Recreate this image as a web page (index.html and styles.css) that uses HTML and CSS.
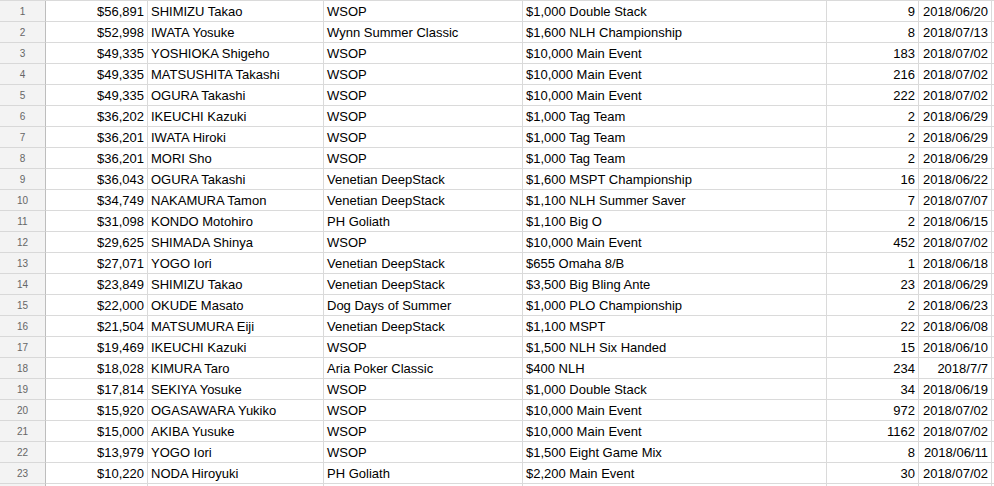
FILE: index.html
```html
<!DOCTYPE html>
<html>
<head>
<meta charset="utf-8">
<link rel="stylesheet" href="styles.css">
</head>
<body>
<div class="sheet">
  <div class="rh">1</div><div class="c r">$56,891</div><div class="c">SHIMIZU Takao</div><div class="c">WSOP</div><div class="c">$1,000 Double Stack</div><div class="c r">9</div><div class="c r">2018/06/20</div><div class="c e"></div>
  <div class="rh">2</div><div class="c r">$52,998</div><div class="c">IWATA Yosuke</div><div class="c">Wynn Summer Classic</div><div class="c">$1,600 NLH Championship</div><div class="c r">8</div><div class="c r">2018/07/13</div><div class="c e"></div>
  <div class="rh">3</div><div class="c r">$49,335</div><div class="c">YOSHIOKA Shigeho</div><div class="c">WSOP</div><div class="c">$10,000 Main Event</div><div class="c r">183</div><div class="c r">2018/07/02</div><div class="c e"></div>
  <div class="rh">4</div><div class="c r">$49,335</div><div class="c">MATSUSHITA Takashi</div><div class="c">WSOP</div><div class="c">$10,000 Main Event</div><div class="c r">216</div><div class="c r">2018/07/02</div><div class="c e"></div>
  <div class="rh">5</div><div class="c r">$49,335</div><div class="c">OGURA Takashi</div><div class="c">WSOP</div><div class="c">$10,000 Main Event</div><div class="c r">222</div><div class="c r">2018/07/02</div><div class="c e"></div>
  <div class="rh">6</div><div class="c r">$36,202</div><div class="c">IKEUCHI Kazuki</div><div class="c">WSOP</div><div class="c">$1,000 Tag Team</div><div class="c r">2</div><div class="c r">2018/06/29</div><div class="c e"></div>
  <div class="rh">7</div><div class="c r">$36,201</div><div class="c">IWATA Hiroki</div><div class="c">WSOP</div><div class="c">$1,000 Tag Team</div><div class="c r">2</div><div class="c r">2018/06/29</div><div class="c e"></div>
  <div class="rh">8</div><div class="c r">$36,201</div><div class="c">MORI Sho</div><div class="c">WSOP</div><div class="c">$1,000 Tag Team</div><div class="c r">2</div><div class="c r">2018/06/29</div><div class="c e"></div>
  <div class="rh">9</div><div class="c r">$36,043</div><div class="c">OGURA Takashi</div><div class="c">Venetian DeepStack</div><div class="c">$1,600 MSPT Championship</div><div class="c r">16</div><div class="c r">2018/06/22</div><div class="c e"></div>
  <div class="rh">10</div><div class="c r">$34,749</div><div class="c">NAKAMURA Tamon</div><div class="c">Venetian DeepStack</div><div class="c">$1,100 NLH Summer Saver</div><div class="c r">7</div><div class="c r">2018/07/07</div><div class="c e"></div>
  <div class="rh">11</div><div class="c r">$31,098</div><div class="c">KONDO Motohiro</div><div class="c">PH Goliath</div><div class="c">$1,100 Big O</div><div class="c r">2</div><div class="c r">2018/06/15</div><div class="c e"></div>
  <div class="rh">12</div><div class="c r">$29,625</div><div class="c">SHIMADA Shinya</div><div class="c">WSOP</div><div class="c">$10,000 Main Event</div><div class="c r">452</div><div class="c r">2018/07/02</div><div class="c e"></div>
  <div class="rh">13</div><div class="c r">$27,071</div><div class="c">YOGO Iori</div><div class="c">Venetian DeepStack</div><div class="c">$655 Omaha 8/B</div><div class="c r">1</div><div class="c r">2018/06/18</div><div class="c e"></div>
  <div class="rh">14</div><div class="c r">$23,849</div><div class="c">SHIMIZU Takao</div><div class="c">Venetian DeepStack</div><div class="c">$3,500 Big Bling Ante</div><div class="c r">23</div><div class="c r">2018/06/29</div><div class="c e"></div>
  <div class="rh">15</div><div class="c r">$22,000</div><div class="c">OKUDE Masato</div><div class="c">Dog Days of Summer</div><div class="c">$1,000 PLO Championship</div><div class="c r">2</div><div class="c r">2018/06/23</div><div class="c e"></div>
  <div class="rh">16</div><div class="c r">$21,504</div><div class="c">MATSUMURA Eiji</div><div class="c">Venetian DeepStack</div><div class="c">$1,100 MSPT</div><div class="c r">22</div><div class="c r">2018/06/08</div><div class="c e"></div>
  <div class="rh">17</div><div class="c r">$19,469</div><div class="c">IKEUCHI Kazuki</div><div class="c">WSOP</div><div class="c">$1,500 NLH Six Handed</div><div class="c r">15</div><div class="c r">2018/06/10</div><div class="c e"></div>
  <div class="rh">18</div><div class="c r">$18,028</div><div class="c">KIMURA Taro</div><div class="c">Aria Poker Classic</div><div class="c">$400 NLH</div><div class="c r">234</div><div class="c r">2018/7/7</div><div class="c e"></div>
  <div class="rh">19</div><div class="c r">$17,814</div><div class="c">SEKIYA Yosuke</div><div class="c">WSOP</div><div class="c">$1,000 Double Stack</div><div class="c r">34</div><div class="c r">2018/06/19</div><div class="c e"></div>
  <div class="rh">20</div><div class="c r">$15,920</div><div class="c">OGASAWARA Yukiko</div><div class="c">WSOP</div><div class="c">$10,000 Main Event</div><div class="c r">972</div><div class="c r">2018/07/02</div><div class="c e"></div>
  <div class="rh">21</div><div class="c r">$15,000</div><div class="c">AKIBA Yusuke</div><div class="c">WSOP</div><div class="c">$10,000 Main Event</div><div class="c r">1162</div><div class="c r">2018/07/02</div><div class="c e"></div>
  <div class="rh">22</div><div class="c r">$13,979</div><div class="c">YOGO Iori</div><div class="c">WSOP</div><div class="c">$1,500 Eight Game Mix</div><div class="c r">8</div><div class="c r">2018/06/11</div><div class="c e"></div>
  <div class="rh">23</div><div class="c r">$10,220</div><div class="c">NODA Hiroyuki</div><div class="c">PH Goliath</div><div class="c">$2,200 Main Event</div><div class="c r">30</div><div class="c r">2018/07/02</div><div class="c e"></div>
  <div class="rh"></div><div class="c r"></div><div class="c"></div><div class="c"></div><div class="c"></div><div class="c r"></div><div class="c r"></div><div class="c e"></div>
</div>
</body>
</html>
```
FILE: styles.css
```css
html, body {
  margin: 0;
  padding: 0;
  background: #fff;
  overflow: hidden;
}
.sheet {
  display: grid;
  grid-template-columns: 46px 102px 176px 199px 304px 92px 73px 2px;
  grid-auto-rows: 21px;
  border-top: 1px solid #dadada;
  font-family: "Liberation Sans", Arial, sans-serif;
  font-size: 13px;
  color: #000;
}
.c, .rh {
  box-sizing: border-box;
  border-right: 1px solid #dadada;
  border-bottom: 1px solid #dadada;
  line-height: 21px;
  height: 21px;
  padding: 0 3px;
  white-space: nowrap;
  overflow: hidden;
}
.rh {
  background: #f3f3f3;
  border-right-color: #bdbdbd;
  border-bottom-color: #d8d8d8;
  color: #666;
  font-size: 10px;
  text-align: center;
  padding: 0;
}
.r {
  text-align: right;
}
.e {
  border-right: none;
  padding: 0;
}
```
